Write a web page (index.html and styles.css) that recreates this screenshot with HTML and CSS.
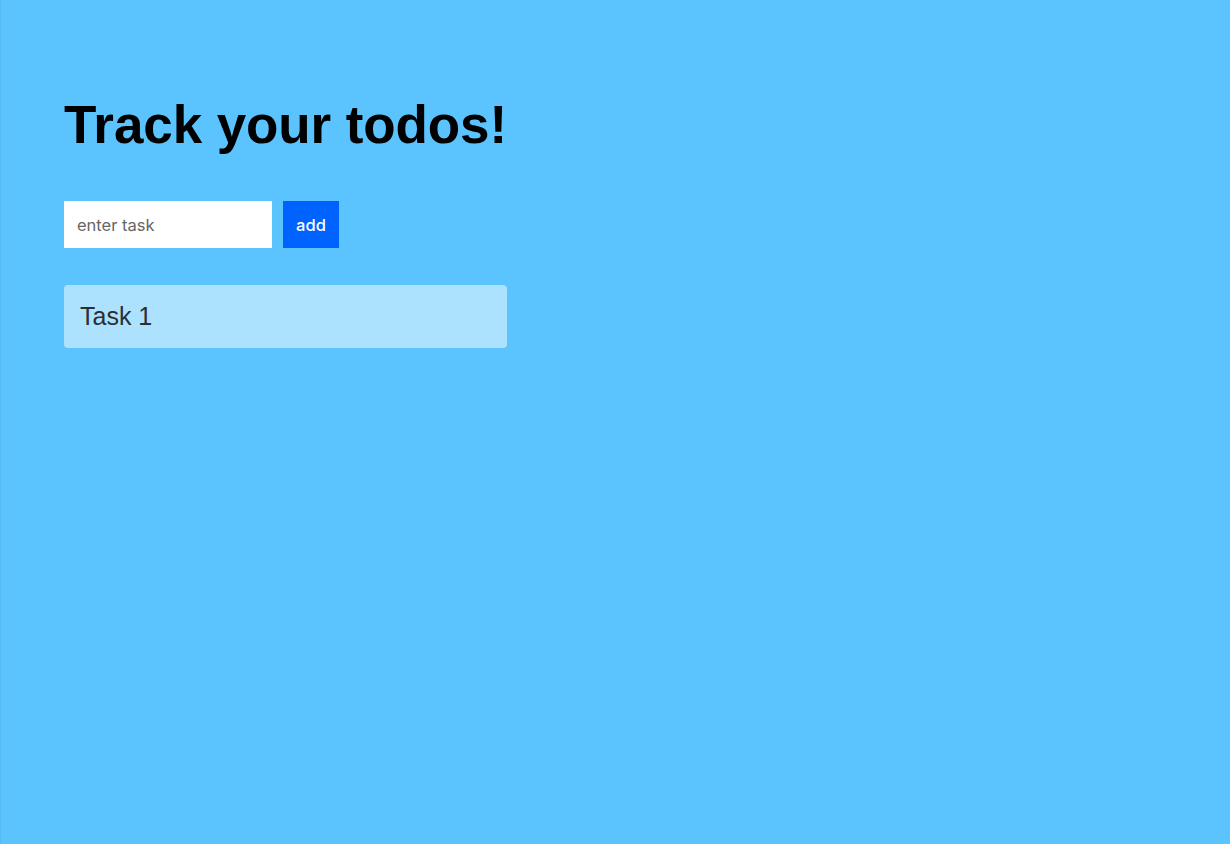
FILE: index.html
```html
<!DOCTYPE html>
<html>
<head>
<meta charset="utf-8">
<link rel="stylesheet" href="styles.css">
</head>
<body>
<div class="page">
  <main class="app">
    <h1 class="title">Track your todos!</h1>
    <form class="add-form">
      <input class="task-input" type="text" placeholder="enter task">
      <button class="add-btn" type="button">add</button>
    </form>
    <ul class="task-list">
      <li class="task">Task 1</li>
    </ul>
  </main>
</div>
</body>
</html>
```

FILE: styles.css
```css
html, body {
  margin: 0;
  padding: 0;
  height: 100%;
}
body {
  background: #5bc4ff;
  font-family: "Liberation Sans", Arial, sans-serif;
}
.page {
  min-height: 100%;
  box-sizing: border-box;
  border-left: 1px solid #56b9f0;
  padding: 90px 0 0 63px;
}
.app {
  width: 443px;
}
.title {
  margin: 0;
  font-size: 53px;
  font-weight: 700;
  line-height: 70px;
  color: #000;
  white-space: nowrap;
  letter-spacing: -0.1px;
}
.add-form {
  display: flex;
  gap: 11px;
  margin-top: 41px;
}
.task-input {
  width: 208px;
  height: 47px;
  box-sizing: border-box;
  border: none;
  outline: none;
  padding: 0 13px;
  font-family: Inter, "Noto Sans", sans-serif;
  font-size: 16.5px;
  background: #fff;
  color: #333;
}
.task-input::placeholder {
  color: #666;
}
.add-btn {
  width: 56px;
  height: 47px;
  border: none;
  padding: 0;
  background: #0062ff;
  color: #fff;
  font-family: Inter, "Noto Sans", sans-serif;
  font-size: 16.5px;
  font-weight: 500;
}
.task-list {
  list-style: none;
  margin: 37px 0 0;
  padding: 0;
}
.task {
  height: 63px;
  box-sizing: border-box;
  padding: 0 16px;
  display: flex;
  align-items: center;
  background: #ade2ff;
  border-radius: 4px;
  font-size: 25px;
  color: #2b2f33;
}
```
